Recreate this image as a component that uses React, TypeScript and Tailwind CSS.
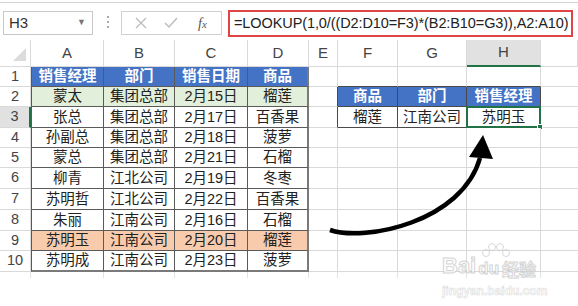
import React from 'react';

const cols = ['A', 'B', 'C', 'D', 'E', 'F', 'G', 'H', 'I'];
const rowH = [20, 20, 21, 20, 20, 21, 21, 21, 20, 21];

const left: string[][] = [
  ['销售经理', '部门', '销售日期', '商品'],
  ['蒙太', '集团总部', '2月15日', '榴莲'],
  ['张总', '集团总部', '2月17日', '百香果'],
  ['孙副总', '集团总部', '2月18日', '菠萝'],
  ['蒙总', '集团总部', '2月21日', '石榴'],
  ['柳青', '江北公司', '2月19日', '冬枣'],
  ['苏明哲', '江北公司', '2月22日', '百香果'],
  ['朱丽', '江南公司', '2月16日', '石榴'],
  ['苏明玉', '江南公司', '2月20日', '榴莲'],
  ['苏明成', '江南公司', '2月23日', '菠萝'],
];

const right: Record<number, string[]> = {
  1: ['商品', '部门', '销售经理'],
  2: ['榴莲', '江南公司', '苏明玉'],
};

function Cell({ r, c }: { r: number; c: number }) {
  // r: 0-based data row, c: 0-based column (A=0)
  let text = '';
  let cls = 'border-r border-b border-[#d9d9d9] bg-white text-[#222]';
  let extra = '';

  if (c <= 3) {
    text = left[r][c];
    cls = 'border-r border-b border-[#5a5a5a] text-[#222]';
    if (r === 0) cls += ' bg-[#4472c4] text-white font-bold';
    else if (r === 1) cls += ' bg-[#e2efda]';
    else if (r === 8) cls += ' bg-[#f8cbad]';
    else cls += ' bg-white';
    if (c === 0) cls += ' border-l';
    if (c === 3) cls += ' border-r-2 border-r-[#7a7a7a]';
    if (r === 9) cls += ' border-b-2 border-b-[#7a7a7a]';
  } else if (c >= 5 && c <= 7 && (r === 1 || r === 2)) {
    text = right[r][c - 5];
    cls = 'border-r border-b border-[#4a4a4a] text-[#222]';
    if (r === 1) cls += ' bg-[#4472c4] text-white font-bold';
    else cls += ' bg-white';
  } else if (c === 4 && (r === 1 || r === 2)) {
    cls = 'border-r border-b border-b-[#d9d9d9] border-r-[#4a4a4a] bg-white';
  } else if (c >= 5 && c <= 7 && r === 0) {
    cls = 'border-r border-b border-r-[#d9d9d9] border-b-[#4a4a4a] bg-white';
  }

  const selected = c === 7 && r === 2;

  return (
    <div className={`relative flex items-center justify-center text-[14.5px] leading-none ${cls} ${extra}`}>
      {text}
      {selected && (
        <div className="absolute -left-px -top-px -right-px -bottom-px border-2 border-[#217346]">
          <div className="absolute -right-[4px] -bottom-[4px] w-[6px] h-[6px] bg-[#217346] border border-white" />
        </div>
      )}
    </div>
  );
}

export default function App() {
  return (
    <div
      className="w-[578px] h-[306px] bg-white overflow-hidden relative text-[#333]"
      style={{ fontFamily: '"Liberation Sans", Arial, "Noto Sans CJK SC", sans-serif' }}
    >
      {/* top line */}
      <div className="h-[3px] border-b border-[#d4d4d4]" />

      {/* formula bar */}
      <div className="h-[37px] flex items-start">
        <div className="ml-[3px] mt-[8px] w-[90px] h-[24px] border border-[#c8c8c8] flex items-center justify-between pl-[5px] pr-[6px]">
          <span className="text-[15px] text-[#333]">H3</span>
          <span className="text-[9px] text-[#777]">▼</span>
        </div>
        <div className="ml-[12px] mt-[13px] w-[6px] flex flex-col items-center gap-[3px]">
          <div className="w-[2px] h-[2px] bg-[#aaa]" />
          <div className="w-[2px] h-[2px] bg-[#aaa]" />
          <div className="w-[2px] h-[2px] bg-[#aaa]" />
        </div>
        <div className="ml-[10px] mt-[8px] w-[101px] h-[24px] border border-[#d0d0d0] flex items-center text-[#b8b8b8]">
          <svg width="12" height="12" viewBox="0 0 12 12" className="ml-[13px]">
            <path d="M1 1 L11 11 M11 1 L1 11" stroke="#bdbdbd" strokeWidth="1.4" />
          </svg>
          <svg width="14" height="12" viewBox="0 0 14 12" className="ml-[17px]">
            <path d="M1 6 L5 10 L13 1" stroke="#bdbdbd" strokeWidth="1.5" fill="none" />
          </svg>
          <span
            className="ml-[20px] text-[14px] italic text-[#555]"
            style={{ fontFamily: '"Liberation Serif", serif' }}
          >
            f<span className="text-[11px]">x</span>
          </span>
        </div>
        <div className="ml-[6px] mt-[7px] w-[345px] h-[27px] border-2 border-[#e04545] flex items-center pl-[4px]">
          <span className="text-[14.5px] text-[#222] whitespace-nowrap tracking-[-0.1px]">
            =LOOKUP(1,0/((D2:D10=F3)*(B2:B10=G3)),A2:A10)
          </span>
        </div>
      </div>

      {/* sheet */}
      <div className="grid grid-cols-[31px_73px_71px_73px_61px_29px_60px_69px_74px_1fr] grid-rows-[27px_20px_20px_21px_20px_20px_21px_21px_21px_20px_21px_6px]">
        {/* column headers */}
        <div className="relative border-r border-b border-[#d9d9d9] bg-white">
          <svg width="13" height="13" viewBox="0 0 13 13" className="absolute right-[4px] bottom-[5px]">
            <path d="M13 0 L13 13 L0 13 Z" fill="#dcdcdc" />
          </svg>
        </div>
        {cols.map((c) => (
          <div
            key={c}
            className={`flex items-center justify-center text-[15px] text-[#444] border-r border-[#d9d9d9] ${
              c === 'H' ? 'bg-[#e1e1e1] border-b-2 border-b-[#217346]' : 'bg-white border-b'
            }`}
          >
            {c === 'I' ? '' : c}
          </div>
        ))}

        {/* rows */}
        {rowH.map((_, r) => (
          <React.Fragment key={r}>
            <div
              className={`flex items-center justify-center text-[14.5px] text-[#444] border-b border-[#d9d9d9] ${
                r === 2 ? 'bg-[#e1e1e1] border-r-2 border-r-[#217346]' : 'bg-white border-r'
              }`}
            >
              {r + 1}
            </div>
            {cols.map((_c, c) =>
              c === 8 ? (
                <div key={c} className="border-b border-[#d9d9d9] bg-white" />
              ) : (
                <Cell key={c} r={r} c={c} />
              )
            )}
          </React.Fragment>
        ))}

        {/* stubs below */}
        <div className="border-r border-[#e2e2e2]" />
        {cols.map((c) => (
          <div key={c} className={c === 'I' ? '' : 'border-r border-[#e2e2e2]'} />
        ))}
      </div>

      {/* curved arrow */}
      <svg className="absolute left-0 top-0 pointer-events-none" width="578" height="306" viewBox="0 0 578 306">
        <path
          d="M330 230 C 365 242, 462 222, 480 158"
          stroke="#000"
          strokeWidth="4.5"
          fill="none"
        />
        <path d="M483 135 L469 157 L493 159 Z" fill="#000" />
      </svg>

      {/* watermark */}
      <div className="absolute left-[442px] top-[245px] w-[110px] pointer-events-none opacity-70">
        <svg width="36" height="16" viewBox="0 0 36 16" className="absolute left-[36px] top-[-2px]">
          <circle cx="8" cy="10" r="3.5" fill="none" stroke="#c9c9c9" />
          <circle cx="14" cy="4" r="3.5" fill="none" stroke="#c9c9c9" />
          <circle cx="22" cy="4" r="3.5" fill="none" stroke="#c9c9c9" />
          <circle cx="28" cy="10" r="3.5" fill="none" stroke="#c9c9c9" />
        </svg>
        <div className="mt-[10px] flex items-end text-[22px] leading-none font-bold text-white [-webkit-text-stroke:1px_#c4c4c4]">
          <span>Bai</span>
          <span className="ml-[2px] text-[17px]">du</span>
          <span className="ml-[3px] text-[17px]" style={{ fontFamily: '"Noto Sans CJK SC", sans-serif' }}>
            经验
          </span>
        </div>
        <div className="mt-[8px] text-[12px] leading-none font-bold text-white [-webkit-text-stroke:0.6px_#cfcfcf]">
          jingyan.baidu.com
        </div>
      </div>
    </div>
  );
}
